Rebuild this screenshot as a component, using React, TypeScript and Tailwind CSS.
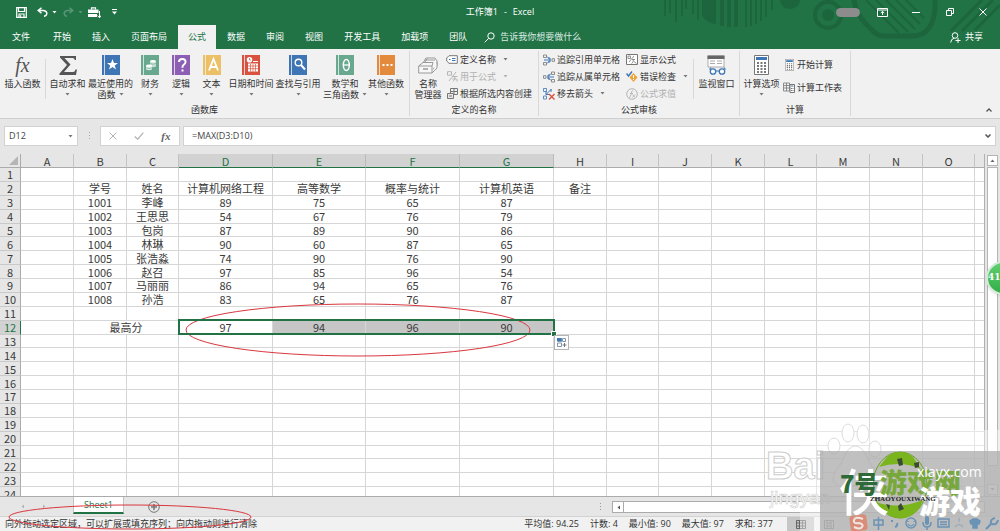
import type { ReactNode } from "react";
import clsx from "clsx";

const tabs = ["开始", "插入", "页面布局", "公式", "数据", "审阅", "视图", "开发工具", "加载项", "团队"];

const columns = [
  { name: "A", width: 53 },
  { name: "B", width: 53 },
  { name: "C", width: 52 },
  { name: "D", width: 94 },
  { name: "E", width: 93 },
  { name: "F", width: 94 },
  { name: "G", width: 94 },
  { name: "H", width: 53 },
  { name: "I", width: 52 },
  { name: "J", width: 53 },
  { name: "K", width: 53 },
  { name: "L", width: 52 },
  { name: "M", width: 53 },
  { name: "N", width: 53 },
  { name: "O", width: 52 },
];

const selected = ["D", "E", "F", "G"];

const sheet: Record<number, string[]> = {
  2: ["", "学号", "姓名", "计算机网络工程", "高等数学", "概率与统计", "计算机英语", "备注"],
  3: ["", "1001", "李峰", "89", "75", "65", "87"],
  4: ["", "1002", "王思思", "54", "67", "76", "79"],
  5: ["", "1003", "包岗", "87", "89", "90", "86"],
  6: ["", "1004", "林琳", "90", "60", "87", "65"],
  7: ["", "1005", "张浩淼", "74", "90", "76", "90"],
  8: ["", "1006", "赵召", "97", "85", "96", "54"],
  9: ["", "1007", "马丽丽", "86", "94", "65", "76"],
  10: ["", "1008", "孙浩", "83", "65", "76", "87"],
  12: ["", "最高分", "", "97", "94", "96", "90"],
};

const stats = ["平均值: 94.25", "计数: 4", "最小值: 90", "最大值: 97", "求和: 377"];

function Arrow({ className }: { className?: string }) {
  return (
    <svg width="5" height="3" viewBox="0 0 5 3" className={clsx("shrink-0", className)}>
      <path d="M0.5 0h4L2.5 2.5z" fill="currentColor" />
    </svg>
  );
}

function Book({ color, children }: { color: string; children: ReactNode }) {
  return (
    <svg width="18" height="20" viewBox="0 0 18 20">
      <rect width="18" height="20" fill={color} />
      <path d="M2.5 0v20" stroke="#f1f1f1" strokeWidth="0.8" />
      {children}
    </svg>
  );
}

function BigButton({
  icon,
  label,
  label2,
  arrow,
  className,
}: {
  icon: ReactNode;
  label: string;
  label2?: string;
  arrow?: boolean;
  className: string;
}) {
  return (
    <button className={clsx("flex shrink-0 flex-col items-center whitespace-nowrap leading-[11px]", className)}>
      <span className="mb-[3px] flex h-5 items-center justify-center">{icon}</span>
      <span>{label}</span>
      <span className="flex h-[11px] items-center gap-[3px]">
        {label2}
        {arrow && <Arrow className="text-[#777]" />}
      </span>
    </button>
  );
}

function SmallButton({
  icon,
  label,
  arrow,
  disabled,
}: {
  icon: ReactNode;
  label: string;
  arrow?: boolean;
  disabled?: boolean;
}) {
  return (
    <button
      disabled={disabled}
      className={clsx("flex h-[17px] items-center gap-[2px] whitespace-nowrap", disabled && "text-[#b0b0b0]")}
    >
      <span className="flex w-3 shrink-0 justify-center">{icon}</span>
      {label}
      {arrow && <Arrow className={clsx("ml-[5px]", !disabled && "text-[#777]")} />}
    </button>
  );
}

function Group({ title, className, children }: { title: string; className: string; children: ReactNode }) {
  return (
    <section className={clsx("flex shrink-0 flex-col justify-between border-r border-[#d8d8d8]", className)}>
      <div className="flex">{children}</div>
      <h2 className="text-center leading-3">{title}</h2>
    </section>
  );
}

// circuit artwork behind the window controls
function TitleArt() {
  return (
    <svg width="340" height="49" viewBox="660 0 340 49" className="absolute right-0 top-0" fill="none" stroke="#1c653d">
      <path d="M665 0v16M670 0v13M676 0v22M682 0v16M686 0v9" strokeWidth="2" />
      <path d="M693 0v14M698 0v20" strokeWidth="2" />
      <path d="M702 0h14v24q-9-1-14-8z" fill="#1c653d" stroke="none" />
      <path d="M722 0v26M729 0v27M736 0v27" strokeWidth="4" />
      <path d="M746 0v27M751 0v26M756 0v24M761 0v21M766 0v17M772 0v10" strokeWidth="2" />
      <path d="M780 0a10 9 0 0 0 20 0z" fill="#1c653d" stroke="none" />
      <circle cx="828" cy="15" r="13" strokeWidth="4" />
      <circle cx="828" cy="15" r="6" fill="#1c653d" stroke="none" />
      <path d="M854 0q2 14 12 24l9 9q4 3 9 3h28q11 0 17-8 7-10 6-28" strokeWidth="5" />
      <path d="M866 0l33 33M876 0l32 32M886 0l29 29M896 0l24 24M906 0l18 18" strokeWidth="2" />
      <path d="M951 31l31-31M962 31l31-31M975 30l25-25" strokeWidth="3" />
    </svg>
  );
}

function TitleBar() {
  return (
    <div className="relative flex h-6 items-center justify-between text-white">
      <div className="flex items-center pl-4">
        <button aria-label="保存" className="w-[21px]">
          <svg width="11" height="11" viewBox="0 0 11 11" fill="none" stroke="white">
            <path d="M.7.7h9.6v9.6H.7zM2.5.7v3.8h6V.7M3 10V7h5v3" strokeWidth="1.2" />
            <path d="M4.7 8v2" />
          </svg>
        </button>
        <button aria-label="撤消" className="flex w-[26px] items-center gap-1">
          <svg width="11" height="10" viewBox="0 0 11 10" fill="none" stroke="white" strokeWidth="1.5">
            <path d="M4.5.7L1.2 3.5l3.3 2.8M1.5 3.5H6.5Q10 4 9.8 6.5T7 9.3" />
          </svg>
          <Arrow />
        </button>
        <button aria-label="恢复" className="flex w-[25px] items-center gap-1 opacity-25">
          <svg width="11" height="10" viewBox="0 0 11 10" fill="none" stroke="white" strokeWidth="1.5">
            <path d="M6.5.7l3.3 2.8-3.3 2.8M9.5 3.5H4.5Q1 4 1.2 6.5T4 9.3" />
          </svg>
          <Arrow />
        </button>
        <button aria-label="工具" className="w-6">
          <svg width="13" height="11" viewBox="0 0 13 11">
            <path d="M3.5 2.5V.8h4v1.7" fill="none" stroke="white" strokeWidth="1.2" />
            <path d="M0 2.5h10.5V6H0zM0 7h9v3H0z" fill="white" />
            <path d="M11.5 4v7M9.5 8.5l2 2.3 1.5-2.3" stroke="white" fill="none" />
          </svg>
        </button>
        <button aria-label="自定义快速访问工具栏">
          <svg width="5" height="6" viewBox="0 0 5 6">
            <path d="M0 .5h5" stroke="white" />
            <path d="M0 2.5h5L2.5 5.5z" fill="white" />
          </svg>
        </button>
      </div>
      <h1 className="absolute inset-x-0 flex justify-center gap-[6px] leading-3">
        <span>工作簿1</span>
        <span>-</span>
        <span>Excel</span>
      </h1>
      <div className="relative flex items-center pr-[13px]">
        <span className="mr-[17px] h-[9px] w-6 rounded-full bg-[#8c8c8c]" />
        <button aria-label="功能区显示选项" className="w-[35px]">
          <svg width="11" height="9" viewBox="0 0 11 9" fill="none" stroke="white">
            <path d="M.5.5h10v8H.5zM.5 2h10M5.5 7V3.5M3.8 5l1.7-1.6L7.2 5" />
          </svg>
        </button>
        <button aria-label="最小化" className="w-[34px]">
          <svg width="8" height="8" viewBox="0 0 8 8">
            <path d="M0 4.5h8" stroke="white" />
          </svg>
        </button>
        <button aria-label="还原" className="w-[33px]">
          <svg width="8" height="8" viewBox="0 0 8 8" fill="none" stroke="white">
            <path d="M.5 2.5h5v5h-5zM2.5 2.5v-2h5v5h-2" />
          </svg>
        </button>
        <button aria-label="关闭">
          <svg width="8" height="8" viewBox="0 0 8 8">
            <path d="M.5.5l7 7M7.5.5l-7 7" stroke="white" />
          </svg>
        </button>
      </div>
    </div>
  );
}

function TabBar() {
  return (
    <nav className="relative flex h-[25px] items-end gap-px text-white">
      <button className="h-6 px-3">文件</button>
      {tabs.map((tab) => (
        <button
          key={tab}
          className={clsx("h-6 shrink-0 px-[10px]", tab === "公式" && "bg-[#f1f1f1] text-[#217346]")}
        >
          {tab}
        </button>
      ))}
      <label className="flex h-6 items-center gap-[5px] pl-[6px]">
        <svg width="11" height="11" viewBox="0 0 11 11" fill="none" stroke="white">
          <circle cx="7" cy="4" r="3.2" />
          <path d="M4.7 6.3L.7 10.3" />
        </svg>
        <input aria-label="告诉我" placeholder="告诉我你想要做什么" className="w-28 bg-transparent placeholder:text-[#dcebe2]" />
      </label>
      <button className="ml-auto mr-[17px] flex h-6 items-center gap-1">
        <svg width="11" height="11" viewBox="0 0 11 11" fill="none" stroke="white">
          <circle cx="5" cy="3.5" r="2.8" />
          <path d="M.7 10.5Q1 6.8 4 6.3M8 6v5M5.5 8.5h5" />
        </svg>
        共享
      </button>
    </nav>
  );
}

function LibraryGroup() {
  return (
    <Group title="函数库" className="w-[410px]">
      <div className="flex pt-1">
        <BigButton
          className="w-[45px]"
          label="插入函数"
          icon={<span className="font-['Liberation_Serif',serif] text-[20px] italic leading-5 text-[#555]">fx</span>}
        />
        <div className="mt-1 h-10 border-l border-[#d8d8d8]" />
        <BigButton
          className="w-[43px]"
          label="自动求和"
          arrow
          icon={
            <svg width="18" height="20" viewBox="0 0 18 20">
              <path d="M1 1h16v4h-1.2Q15.5 3 13.5 3H5.5l6 6.5L5 17h9q2 0 2.5-2.5H18L17 20H.5v-1.5l7.5-8.5L1 2.5z" fill="#555" />
            </svg>
          }
        />
        <BigButton
          className="w-[43px]"
          label="最近使用的"
          label2="函数"
          arrow
          icon={
            <Book color="#3e76b5">
              <path d="M10.5 4l1.5 4h4l-3.2 2.5 1.2 4-3.5-2.4L7 14.5l1.2-4L5 8h4z" fill="white" />
            </Book>
          }
        />
        <BigButton
          className="w-9"
          label="财务"
          arrow
          icon={
            <Book color="#68a88e">
              <path d="M9 6.5v5q3 1.500 6 0v-5z" fill="#c5dfd3" />
              <ellipse cx="12" cy="6.3" rx="3" ry="1.3" fill="white" />
              <path d="M5 11v3.500q3 1.500 6 0V11z" fill="#d8ebe2" />
              <ellipse cx="8" cy="10.8" rx="3" ry="1.3" fill="white" />
              <path d="M5 12.800q3 1.500 6 0M9 8.500q3 1.500 6 0" fill="none" stroke="#68a88e" strokeWidth="0.6" />
            </Book>
          }
        />
        <BigButton
          className="w-[26px]"
          label="逻辑"
          arrow
          icon={
            <Book color="#8c5fb4">
              <path d="M7 7Q7 4 10.3 4t3.2 3q0 1.5-1.5 2.5T10.5 12v.8M10.5 14.5v2" fill="none" stroke="white" strokeWidth="2" />
            </Book>
          }
        />
        <BigButton
          className="w-[35px]"
          label="文本"
          arrow
          icon={
            <Book color="#ecc067">
              <path d="M6 15.5L10.5 4 15 15.5M7.5 12h6" fill="none" stroke="white" strokeWidth="1.8" />
            </Book>
          }
        />
        <BigButton
          className="w-[44px]"
          label="日期和时间"
          arrow
          icon={
            <Book color="#d8523f">
              <path d="M6 8.5h10v8H6z" fill="white" />
              <path d="M6 11h10M6 13.7h10M8.5 9v7.5M11 9v7.5M13.5 9v7.5" stroke="#d8523f" strokeWidth="0.7" />
              <circle cx="7.5" cy="4.8" r="2.8" fill="white" />
              <path d="M7.5 3v2H9" stroke="#d8523f" fill="none" strokeWidth="0.7" />
              <path d="M11 6.500h5" stroke="white" />
            </Book>
          }
        />
        <BigButton
          className="w-[50px]"
          label="查找与引用"
          arrow
          icon={
            <Book color="#3e76b5">
              <circle cx="9.5" cy="7.5" r="3.3" fill="none" stroke="white" strokeWidth="1.4" />
              <path d="M12 10l4 4.5" stroke="white" strokeWidth="2" />
            </Book>
          }
        />
        <BigButton
          className="w-[44px]"
          label="数学和"
          label2="三角函数"
          arrow
          icon={
            <Book color="#68a88e">
              <ellipse cx="10.3" cy="10" rx="3" ry="5.5" fill="none" stroke="white" strokeWidth="1.5" />
              <path d="M7.5 10H13" stroke="white" strokeWidth="1.3" />
            </Book>
          }
        />
        <BigButton
          className="w-[38px]"
          label="其他函数"
          arrow
          icon={
            <Book color="#e38a3c">
              <path d="M5.5 10h2M9.5 10h2M13.5 10h2" stroke="white" strokeWidth="2" />
            </Book>
          }
        />
      </div>
    </Group>
  );
}

function NamesGroup() {
  return (
    <Group title="定义的名称" className="w-[129px]">
      <div className="flex pt-1">
        <BigButton
          className="w-[36px]"
          label="名称"
          label2="管理器"
          icon={
            <svg width="20" height="17" viewBox="0 0 20 17" fill="#f7f7f7" stroke="#999">
              <path d="M5 6l3-5h9l2 3v5l-4 3" />
              <path d="M7 5l2.5-3.5M7 3h10" />
              <path d="M.7 9L5 5.500h10L14 9zM.7 9v7H14V9M14 16l5-5V5" />
              <path d="M5 12h5" strokeWidth="1.5" />
            </svg>
          }
        />
      </div>
      <div>
        <SmallButton
          label="定义名称"
          arrow
          icon={
            <svg width="12" height="9" viewBox="0 0 12 9" fill="white" stroke="#777">
              <path d="M3 .7h8.3v7.600H3L.7 6V3z" />
              <path d="M3 4.5h1.5M6 3.5h3.5M6 5.5h3.5" stroke="#3e76b5" />
            </svg>
          }
        />
        <SmallButton
          label="用于公式"
          arrow
          disabled
          icon={
            <svg width="11" height="11" viewBox="0 0 11 11" fill="none" stroke="#b5b5b5">
              <path d="M.5.7h4v3.500h-4zM2 10L9 1M6 5.500h4.500M8 5.500q0 4-2 5M5.500 8h4M10 8v2.500" />
            </svg>
          }
        />
        <SmallButton
          label="根据所选内容创建"
          icon={
            <svg width="11" height="11" viewBox="0 0 11 11" fill="none" stroke="#777">
              <path d="M3.500.5h7v6h-7zM7 .5v6M3.500 3.500h7" />
              <path d="M.5 5.500h6v5h-6z" fill="#e8e8e8" />
              <path d="M2 8h3" />
            </svg>
          }
        />
      </div>
    </Group>
  );
}

function TraceIcon({ flip }: { flip?: boolean }) {
  return (
    <svg width="12" height="12" viewBox="0 0 12 12" fill="none" className={clsx(flip && "rotate-180")}>
      <path d="M.5 1h3v2.500h-3zM.5 8.500h3V11h-3z" stroke="#777" strokeWidth="0.8" />
      <path d="M4 2.500l3 3M4 9.500l3-3M1 6h6M5 4h2v4H5" stroke="#3e76b5" />
      <path d="M9 4.700h2.500v2.600H9z" stroke="#777" strokeWidth="0.8" />
    </svg>
  );
}

function AuditGroup() {
  return (
    <Group title="公式审核" className="w-[201px]">
      <div className="w-[83px] pl-1">
        <SmallButton label="追踪引用单元格" icon={<TraceIcon />} />
        <SmallButton label="追踪从属单元格" icon={<TraceIcon flip />} />
        <SmallButton
          label="移去箭头"
          arrow
          icon={
            <svg width="12" height="12" viewBox="0 0 12 12" fill="none">
              <path d="M.5.5h3v3h-3zM.5 8h3v3h-3z" stroke="#3e76b5" strokeWidth="0.8" />
              <path d="M8.500 1L3 6.500M3 3v3.500h3.500M8 1v3" stroke="#3e76b5" />
              <path d="M6 6l5.500 5.500M11.500 6L6 11.500" stroke="#d8523f" strokeWidth="1.4" />
            </svg>
          }
        />
      </div>
      <div className="w-[71px] pl-1">
        <SmallButton
          label="显示公式"
          icon={
            <svg width="12" height="11" viewBox="0 0 12 11" fill="white" stroke="#777">
              <path d="M.5.5h11v10H.5z" />
              <path d="M2 2h2.500v2.500H2zM3 8l5-6M6 5.500h3M7.500 5q0 4-2 4.500M8 7.500l2.500 2" fill="none" strokeWidth="0.8" />
            </svg>
          }
        />
        <SmallButton
          label="错误检查"
          arrow
          icon={
            <svg width="12" height="11" viewBox="0 0 12 11" fill="none">
              <path d="M7.500 2l4 4.500-4 4.500-4-4.500z" fill="#eba43a" />
              <path d="M7.500 4v3M7.500 8v1" stroke="white" />
              <path d="M.5 2.500L2.500 5 6 .5" stroke="#3e76b5" strokeWidth="1.4" />
            </svg>
          }
        />
        <SmallButton
          label="公式求值"
          disabled
          icon={
            <svg width="12" height="12" viewBox="0 0 12 12" fill="none" stroke="#b5b5b5">
              <circle cx="6" cy="6" r="5.3" />
              <path d="M3 9.500q1.500 0 2-3l.7-3Q6 2.500 7 3M4 5.500h3M6.500 6.500l2.500 3M9 6.500l-2.500 3" strokeWidth="0.9" />
            </svg>
          }
        />
      </div>
      <div className="mt-2 h-10 border-l border-[#d8d8d8]" />
      <div className="pt-1">
        <BigButton
          className="w-[45px]"
          label="监视窗口"
          icon={
            <svg width="20" height="20" viewBox="0 0 20 20" fill="none">
              <path d="M1 1h16v11H1z" fill="white" stroke="#999" strokeWidth="0.8" />
              <path d="M.5.5h17V4H.5z" fill="#666" />
              <path d="M3 6h5M10 6h5M3 8.500h5M10 8.500h5" stroke="#aaa" />
              <circle cx="6" cy="16.500" r="2.700" fill="white" stroke="#3e76b5" strokeWidth="1.3" />
              <circle cx="15" cy="16.500" r="2.700" fill="white" stroke="#3e76b5" strokeWidth="1.3" />
              <path d="M9 16h3M2.500 14.500L4 12.500M18.500 14.500L17 12.500" stroke="#3e76b5" strokeWidth="1.2" />
            </svg>
          }
        />
      </div>
    </Group>
  );
}

function Calculator({ width, height }: { width: number; height: number }) {
  return (
    <svg width={width} height={height} viewBox="0 0 15 20" fill="none">
      <path d="M.5.5h14v19H.5z" fill="white" stroke="#777" />
      <path d="M2 2h11v3H2z" fill="#3e76b5" />
      <path d="M3 8h9M3 11h9M3 14h9M3 17h9" stroke="#777" strokeWidth="1.8" strokeDasharray="2 1.5" />
    </svg>
  );
}

function CalcGroup() {
  return (
    <Group title="计算" className="w-[111px]">
      <div className="pt-1">
        <BigButton className="w-[43px]" label="计算选项" arrow icon={<Calculator width={15} height={20} />} />
      </div>
      <div className="flex flex-col gap-[6px] pt-[5px]">
        <SmallButton label="开始计算" icon={<Calculator width={9} height={12} />} />
        <SmallButton
          label="计算工作表"
          icon={
            <svg width="12" height="11" viewBox="0 0 12 11" fill="none" stroke="#777">
              <path d="M.5 1h6v8h-6zM3.500 1v8M.5 3.500h6M.5 6h6" strokeWidth="0.8" />
              <path d="M7 2.500h4.500v8H7z" fill="white" />
              <path d="M8 4h2.500" stroke="#3e76b5" />
              <path d="M8 6.500h2.500M8 8.500h2.500" strokeDasharray="1 .5" />
            </svg>
          }
        />
      </div>
    </Group>
  );
}

function Ribbon() {
  return (
    <div className="flex h-[70px] border-b border-[#cfcfcf] bg-[#f1f1f1] py-[2px] text-[#333]">
      <LibraryGroup />
      <NamesGroup />
      <AuditGroup />
      <CalcGroup />
      <button aria-label="折叠功能区" className="ml-auto mr-2 self-end pb-1">
        <svg width="6" height="4" viewBox="0 0 6 4">
          <path d="M.5 3.500L3 1l2.500 2.500" fill="none" stroke="#555" strokeWidth="1.3" />
        </svg>
      </button>
    </div>
  );
}

function FormulaBar() {
  return (
    <div className="flex h-[35px] items-start bg-[#e6e6e6] px-1 pt-[7px] text-[#444]">
      <div className="flex h-5 w-[74px] items-center justify-between border border-[#d2d2d2] bg-white px-1">
        <input aria-label="名称框" defaultValue="D12" className="w-12 bg-transparent" />
        <Arrow className="text-[#777]" />
      </div>
      <svg width="22" height="20" viewBox="0 0 22 20" className="shrink-0">
        <path d="M11.500 6v9" stroke="#aaa" strokeDasharray="1 2" />
      </svg>
      <div className="mr-[3px] flex h-5 w-20 shrink-0 items-center justify-around border border-[#d2d2d2] bg-white">
        <button aria-label="取消">
          <svg width="8" height="8" viewBox="0 0 8 8">
            <path d="M.5.5l7 7M7.500.5l-7 7" stroke="#b5b5b5" />
          </svg>
        </button>
        <button aria-label="输入">
          <svg width="10" height="8" viewBox="0 0 10 8">
            <path d="M.7 4.500l3 2.700L9.300.7" fill="none" stroke="#b5b5b5" strokeWidth="1.3" />
          </svg>
        </button>
        <button className="font-['Liberation_Serif',serif] text-[11px] font-bold italic leading-3 text-[#666]">fx</button>
      </div>
      <div className="flex h-5 flex-1 items-center border border-[#d2d2d2] bg-white px-2">
        <input aria-label="编辑栏" defaultValue="=MAX(D3:D10)" className="flex-1 bg-transparent" />
        <svg width="6" height="4" viewBox="0 0 6 4" className="-mr-1">
          <path d="M.5.5L3 3 5.500.5" fill="none" stroke="#555" strokeWidth="1.5" />
        </svg>
      </div>
    </div>
  );
}

function Cell({ row, index }: { row: number; index: number }) {
  const column = columns[index].name;
  const isSelected = row === 12 && selected.includes(column);
  return (
    <td
      colSpan={row === 12 && column === "B" ? 2 : 1}
      className={clsx(
        "border-b border-r border-[#d6d6d6] p-0 text-center",
        isSelected && column !== "D" && "bg-[#c6c6c6]",
        isSelected && column === "D" && "relative",
      )}
    >
      {sheet[row]?.[index]}
      {isSelected && column === "D" && (
        <span className="absolute -left-px -top-[2px] z-10 h-4 w-[377px] border-2 border-[#217346]">
          <span className="absolute -bottom-[3px] -right-[3px] size-1 bg-[#217346] outline outline-white" />
          <button aria-label="自动填充选项" className="absolute left-[374px] top-[14px] border border-[#b5b5b5] bg-white p-px">
            <svg width="11" height="11" viewBox="0 0 11 11" fill="none">
              <path d="M1.500 1.500h4v3h-4zM6.500 1.500h3v3h-3zM1.500 6h4v3.500h-4z" stroke="#8298b5" />
              <path d="M1 1h4.500v3H1z" fill="#3e76b5" />
              <path d="M8.500 6v4M6.500 8h4" stroke="#777" />
            </svg>
          </button>
        </span>
      )}
    </td>
  );
}

function Grid() {
  const rows = Array.from({ length: 24 }, (_, i) => i + 1);
  return (
    <div className="flex min-h-0 flex-1 bg-[#e6e6e6]">
      <div className="min-w-0 flex-1 overflow-hidden border-r border-[#b0b0b0]">
        <table className="h-[347px] w-full table-fixed border-separate border-spacing-0 bg-white font-['Noto_Sans_CJK_SC',sans-serif] text-[11px] leading-[12px] text-[#3a3a3a]">
          <colgroup>
            <col className="w-[21px]" />
            {columns.map((c) => (
              <col key={c.name} style={{ width: c.width }} />
            ))}
            <col />
          </colgroup>
          <thead>
            <tr className="h-[14px] bg-[#e6e6e6]">
              <th className="border-b border-r border-[#ababab] p-0">
                <svg width="9" height="9" viewBox="0 0 9 9" className="ml-auto mr-[2px]">
                  <path d="M9 0v9H0z" fill="#b5b5b5" />
                </svg>
              </th>
              {columns.map((c) => (
                <th
                  key={c.name}
                  className={clsx(
                    "border-b border-r p-0 font-normal",
                    selected.includes(c.name)
                      ? "border-r-[#bbb] border-b-[#217346] bg-[#d2d2d2] text-[#217346]"
                      : "border-r-[#c3c3c3] border-b-[#ababab]",
                  )}
                >
                  {c.name}
                </th>
              ))}
              <th className="border-b border-[#ababab] p-0" />
            </tr>
          </thead>
          <tbody>
            {rows.map((row) => (
              <tr key={row}>
                <th
                  className={clsx(
                    "border-b border-r border-b-[#c9c9c9] p-0 font-normal",
                    row === 12 ? "border-r-[#217346] bg-[#d2d2d2] text-[#217346]" : "border-r-[#ababab] bg-[#e6e6e6]",
                  )}
                >
                  {row}
                </th>
                {columns.map((c, index) =>
                  row === 12 && c.name === "C" ? null : <Cell key={c.name} row={row} index={index} />,
                )}
                <td className="border-b border-[#d6d6d6] p-0" />
              </tr>
            ))}
          </tbody>
        </table>
      </div>
      <div className="flex w-[15px] flex-col items-center gap-px py-px">
        <button aria-label="向上滚动" className="flex h-[11px] w-[11px] items-center justify-center border border-[#b5b5b5] bg-white">
          <Arrow className="rotate-180 text-[#666]" />
        </button>
        <div className="w-[11px] flex-1 border border-[#b5b5b5] bg-white" />
        <div className="h-4" />
        <button aria-label="向下滚动" className="flex h-[11px] w-[11px] items-center justify-center border border-[#b5b5b5] bg-white">
          <Arrow className="text-[#666]" />
        </button>
      </div>
    </div>
  );
}

function SheetBar() {
  return (
    <div className="flex h-5 border-t border-[#ababab] bg-[#e6e6e6]">
      <div className="flex w-[73px] items-center gap-[17px] pl-5 text-[#b5b5b5]">
        <Arrow className="rotate-90" />
        <Arrow className="-rotate-90" />
      </div>
      <button className="h-[17px] w-[51px] border-x border-b-2 border-x-[#c3c3c3] border-b-[#217346] bg-white text-[9px] leading-3 text-[#217346]">
        Sheet1
      </button>
      <button aria-label="新工作表" className="ml-6 self-center">
        <svg width="12" height="12" viewBox="0 0 12 12" fill="none" stroke="#777">
          <circle cx="6" cy="6" r="5.3" />
          <path d="M6 3v6M3 6h6" strokeWidth="1.5" />
        </svg>
      </button>
      <div className="ml-auto mr-[15px] mt-1 flex h-3 w-[39%]">
        <svg width="17" height="12" viewBox="0 0 17 12" className="shrink-0">
          <path d="M5.500 2v8" stroke="#999" strokeDasharray="1 2" />
        </svg>
        <button aria-label="向左滚动" className="flex w-3 shrink-0 items-center justify-center border border-[#ababab] bg-white">
          <Arrow className="rotate-90 text-[#555]" />
        </button>
        <div className="flex-1 border-y border-r border-[#ababab] bg-white" />
      </div>
    </div>
  );
}

function StatusBar() {
  return (
    <footer className="flex h-[15px] items-center justify-between border-t border-[#d2d2d2] bg-[#f1f1f1] pl-[5px] leading-3 text-[#333]">
      <p className="whitespace-nowrap">向外拖动选定区域，可以扩展或填充序列；向内拖动则进行清除</p>
      <div className="flex h-full items-center">
        <div className="mr-[14px] flex gap-[11px] whitespace-nowrap">
          {stats.map((s) => (
            <span key={s}>{s}</span>
          ))}
        </div>
        <div className="flex h-full w-[213px]">
          <button aria-label="普通" className="flex w-[27px] items-center justify-center bg-[#c6c6c6]">
            <svg width="10" height="9" viewBox="0 0 10 9" fill="none" stroke="#666">
              <path d="M.5.5h9v8h-9zM3.500.5v8M6.500.5v8M.5 3h9M.5 6h9" />
            </svg>
          </button>
          <button aria-label="页面布局" className="ml-[10px] flex items-center">
            <svg width="10" height="9" viewBox="0 0 10 9" fill="none" stroke="#666">
              <path d="M.5.5h9v8h-9zM3 .5v8M7 .5v8M3 3h4M3 6h4" />
            </svg>
          </button>
        </div>
      </div>
    </footer>
  );
}

// stacked site watermarks, with the input method's tray showing through
function Watermarks() {
  return (
    <div className="pointer-events-none absolute bottom-0 right-0 h-[111px] w-[240px] overflow-hidden">
      <div className="absolute bottom-0 right-0 h-[101px] w-[200px] bg-white/40" />
      <svg width="240" height="111" viewBox="0 0 240 111" className="absolute inset-0">
        <g fill="white" stroke="#dcdcdc" strokeWidth="1">
          <ellipse cx="88" cy="13" rx="6" ry="9" />
          <ellipse cx="103" cy="14" rx="6" ry="9" />
          <ellipse cx="74" cy="26" rx="6" ry="8" />
          <ellipse cx="115" cy="29" rx="6" ry="8" />
          <path d="M95 26q7 0 12 11t10 15q5 14-9 15-12-3-26 0-13-2-7-15 5-5 9-15t11-11z" />
        </g>
        <text x="6" y="59" fontSize="38" fontFamily="Liberation Sans, sans-serif" fontWeight="bold" fill="white" stroke="#cdcdcd">
          Bai
        </text>
        <text x="10" y="84" fontSize="19" fontFamily="Liberation Sans, sans-serif" fill="white" stroke="#cdcdcd" strokeWidth="0.6">
          jingyan
        </text>
      </svg>
      <div className="absolute bottom-0 right-0 h-20 w-[180px] bg-[#ababab]/75" />
      <svg width="240" height="111" viewBox="0 0 240 111" className="absolute inset-0">
        <ellipse cx="140" cy="65" rx="27" ry="33" fill="#b9bcb4" fillOpacity="0.5" stroke="#6aa21e" />
        <path d="M127 37q13-10 26 0l8 12q-20-9-42-2z" fill="#7ab51d" />
        <path d="M116 82q22 8 47-2-4 14-18 18-18 2-29-16z" fill="#7ab51d" />
        <path d="M137 39l5-1 1 7-4 1zM154 43l5-1 0 5-4 1zM138 86l3-3 3 6-5 2zM126 84l4 1-1 5z" fill="#3b4a34" />
        <g fontFamily="Noto Sans CJK SC, sans-serif" fontWeight="900">
          <text x="79" y="91" fontSize="50" fill="white" fontWeight="500">
            侠
          </text>
          <text x="80" y="73" fontSize="24" fill="#2f6a3a">
            7号
          </text>
          <text x="120" y="73" fontSize="27" fill="#78a83c">
            游戏网
          </text>
          <text x="159" y="93" fontSize="31" fill="white">
            游戏
          </text>
        </g>
        <text x="157" y="57" fontSize="14" fontFamily="Open Sans, sans-serif" fill="white">
          xiayx.com
        </text>
        <text x="110" y="81" fontSize="7" fontFamily="Liberation Serif, serif" fontWeight="bold" fill="#222">
          ZHAOYOUXIWANG
        </text>
        <g fill="none" stroke="#6b93b5" strokeWidth="1.5">
          <rect x="90" y="95" width="17" height="16" rx="3" fill="#d98d78" stroke="none" transform="rotate(-7 98 103)" />
          <path d="M103 99q-8-3-9 1t5 3q5 1 3 4t-8 0" stroke="#f0e6e2" strokeWidth="2" />
          <path d="M114 100h9v5h-9zM118.500 97v13" />
          <path d="M131 101h2M137 103q1 3-2 4" strokeWidth="2" />
          <circle cx="151" cy="103" r="5" />
          <path d="M148 101v1M154 101v1M148 104q3 4 6 0" strokeWidth="1.2" />
          <path d="M167 98v5" strokeWidth="4" strokeLinecap="round" />
          <path d="M163 102q0 5 4 5t4-5M167 107v3" />
          <path d="M178 99h11v8h-11zM180 102h7M180 104.500h7" />
          <path d="M199 98v4M195 107q4-5 8 0" strokeOpacity="0.4" />
          <path d="M210 101l3-2h4l3 2-1 3h-2v4h-4v-4h-2z" fill="#6b93b5" />
          <path d="M226 109l6-6M231 104q-1-5 4-6M232 104q5 1 6-4" strokeWidth="2" />
        </g>
      </svg>
    </div>
  );
}

export default function App() {
  return (
    <div className="relative flex h-screen flex-col overflow-hidden font-['Open_Sans','Noto_Sans_CJK_SC',sans-serif] text-[9px]">
      <header className="relative bg-[#217346]">
        <TitleArt />
        <TitleBar />
        <TabBar />
      </header>
      <Ribbon />
      <FormulaBar />
      <Grid />
      <SheetBar />
      <StatusBar />

      <svg width="560" height="531" viewBox="0 0 560 531" className="pointer-events-none absolute left-0 top-0" fill="none" stroke="#d9363e">
        <ellipse cx="358" cy="330" rx="172" ry="26" />
        <ellipse cx="130" cy="517" rx="121" ry="12" />
      </svg>
      <Watermarks />
      <div className="absolute -right-5 top-[261px] flex size-[34px] items-center rounded-full border-2 border-[#d5ead8] bg-linear-to-b from-[#5fd06f] to-[#2fae48] font-['DejaVu_Serif',serif] font-bold text-white shadow">
        41
      </div>
    </div>
  );
}
